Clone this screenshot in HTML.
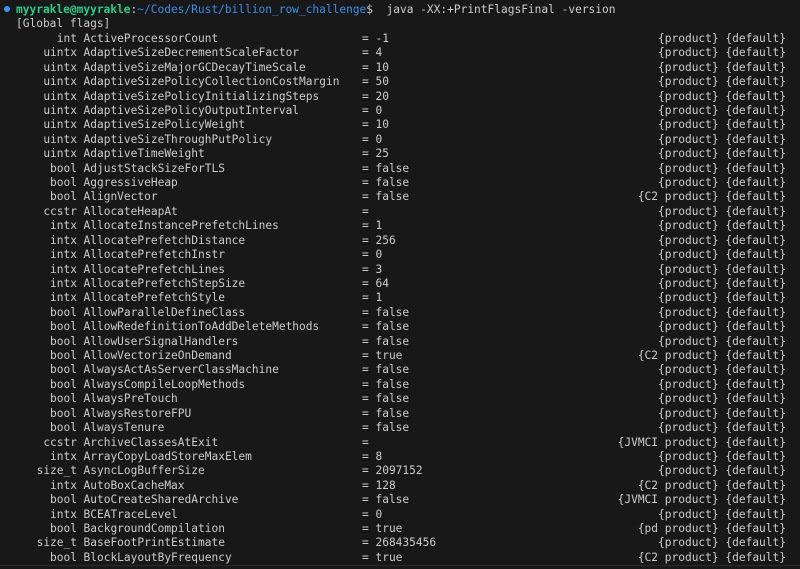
<!DOCTYPE html>
<html><head><meta charset="utf-8"><style>
html,body{margin:0;padding:0;background:#181818;width:800px;height:569px;overflow:hidden}
body{font-family:"DejaVu Sans Mono","Liberation Mono",monospace;font-size:11.2px;color:#cccccc;position:relative}
.r{position:absolute;left:0;width:800px;height:14.42px;line-height:14.42px;white-space:pre;margin-top:1.3px}
.t{position:absolute;right:723px;text-align:right}
.n{position:absolute;left:83.5px}
.v{position:absolute;left:362px}
.k{position:absolute;right:14px}
.g{color:#23d18b;font-weight:bold}.b{color:#3b8eea}
.dot{position:absolute;left:4px;top:6px;width:6px;height:6px;border-radius:50%;background:#3794ff}
.bl{position:absolute;left:0;top:565px;width:800px;height:1px;background:#2b2b2b}
</style></head><body>
<div class="dot"></div>
<div class="r" style="top:1.8px;left:16px"><span class="g">myyrakle@myyrakle</span>:<span class="b">~/Codes/Rust/billion_row_challenge</span>$  java -XX:+PrintFlagsFinal -version</div>
<div class="r" style="top:16.2px;left:16px">[Global flags]</div>
<div class="r" style="top:30.6px"><span class="t">int</span><span class="n">ActiveProcessorCount</span><span class="v">= -1</span><span class="k">{product} {default}</span></div>
<div class="r" style="top:45.0px"><span class="t">uintx</span><span class="n">AdaptiveSizeDecrementScaleFactor</span><span class="v">= 4</span><span class="k">{product} {default}</span></div>
<div class="r" style="top:59.5px"><span class="t">uintx</span><span class="n">AdaptiveSizeMajorGCDecayTimeScale</span><span class="v">= 10</span><span class="k">{product} {default}</span></div>
<div class="r" style="top:73.9px"><span class="t">uintx</span><span class="n">AdaptiveSizePolicyCollectionCostMargin</span><span class="v">= 50</span><span class="k">{product} {default}</span></div>
<div class="r" style="top:88.3px"><span class="t">uintx</span><span class="n">AdaptiveSizePolicyInitializingSteps</span><span class="v">= 20</span><span class="k">{product} {default}</span></div>
<div class="r" style="top:102.7px"><span class="t">uintx</span><span class="n">AdaptiveSizePolicyOutputInterval</span><span class="v">= 0</span><span class="k">{product} {default}</span></div>
<div class="r" style="top:117.1px"><span class="t">uintx</span><span class="n">AdaptiveSizePolicyWeight</span><span class="v">= 10</span><span class="k">{product} {default}</span></div>
<div class="r" style="top:131.5px"><span class="t">uintx</span><span class="n">AdaptiveSizeThroughPutPolicy</span><span class="v">= 0</span><span class="k">{product} {default}</span></div>
<div class="r" style="top:146.0px"><span class="t">uintx</span><span class="n">AdaptiveTimeWeight</span><span class="v">= 25</span><span class="k">{product} {default}</span></div>
<div class="r" style="top:160.4px"><span class="t">bool</span><span class="n">AdjustStackSizeForTLS</span><span class="v">= false</span><span class="k">{product} {default}</span></div>
<div class="r" style="top:174.8px"><span class="t">bool</span><span class="n">AggressiveHeap</span><span class="v">= false</span><span class="k">{product} {default}</span></div>
<div class="r" style="top:189.2px"><span class="t">bool</span><span class="n">AlignVector</span><span class="v">= false</span><span class="k">{C2 product} {default}</span></div>
<div class="r" style="top:203.6px"><span class="t">ccstr</span><span class="n">AllocateHeapAt</span><span class="v">=</span><span class="k">{product} {default}</span></div>
<div class="r" style="top:218.0px"><span class="t">intx</span><span class="n">AllocateInstancePrefetchLines</span><span class="v">= 1</span><span class="k">{product} {default}</span></div>
<div class="r" style="top:232.5px"><span class="t">intx</span><span class="n">AllocatePrefetchDistance</span><span class="v">= 256</span><span class="k">{product} {default}</span></div>
<div class="r" style="top:246.9px"><span class="t">intx</span><span class="n">AllocatePrefetchInstr</span><span class="v">= 0</span><span class="k">{product} {default}</span></div>
<div class="r" style="top:261.3px"><span class="t">intx</span><span class="n">AllocatePrefetchLines</span><span class="v">= 3</span><span class="k">{product} {default}</span></div>
<div class="r" style="top:275.7px"><span class="t">intx</span><span class="n">AllocatePrefetchStepSize</span><span class="v">= 64</span><span class="k">{product} {default}</span></div>
<div class="r" style="top:290.1px"><span class="t">intx</span><span class="n">AllocatePrefetchStyle</span><span class="v">= 1</span><span class="k">{product} {default}</span></div>
<div class="r" style="top:304.5px"><span class="t">bool</span><span class="n">AllowParallelDefineClass</span><span class="v">= false</span><span class="k">{product} {default}</span></div>
<div class="r" style="top:319.0px"><span class="t">bool</span><span class="n">AllowRedefinitionToAddDeleteMethods</span><span class="v">= false</span><span class="k">{product} {default}</span></div>
<div class="r" style="top:333.4px"><span class="t">bool</span><span class="n">AllowUserSignalHandlers</span><span class="v">= false</span><span class="k">{product} {default}</span></div>
<div class="r" style="top:347.8px"><span class="t">bool</span><span class="n">AllowVectorizeOnDemand</span><span class="v">= true</span><span class="k">{C2 product} {default}</span></div>
<div class="r" style="top:362.2px"><span class="t">bool</span><span class="n">AlwaysActAsServerClassMachine</span><span class="v">= false</span><span class="k">{product} {default}</span></div>
<div class="r" style="top:376.6px"><span class="t">bool</span><span class="n">AlwaysCompileLoopMethods</span><span class="v">= false</span><span class="k">{product} {default}</span></div>
<div class="r" style="top:391.0px"><span class="t">bool</span><span class="n">AlwaysPreTouch</span><span class="v">= false</span><span class="k">{product} {default}</span></div>
<div class="r" style="top:405.5px"><span class="t">bool</span><span class="n">AlwaysRestoreFPU</span><span class="v">= false</span><span class="k">{product} {default}</span></div>
<div class="r" style="top:419.9px"><span class="t">bool</span><span class="n">AlwaysTenure</span><span class="v">= false</span><span class="k">{product} {default}</span></div>
<div class="r" style="top:434.3px"><span class="t">ccstr</span><span class="n">ArchiveClassesAtExit</span><span class="v">=</span><span class="k">{JVMCI product} {default}</span></div>
<div class="r" style="top:448.7px"><span class="t">intx</span><span class="n">ArrayCopyLoadStoreMaxElem</span><span class="v">= 8</span><span class="k">{product} {default}</span></div>
<div class="r" style="top:463.1px"><span class="t">size_t</span><span class="n">AsyncLogBufferSize</span><span class="v">= 2097152</span><span class="k">{product} {default}</span></div>
<div class="r" style="top:477.5px"><span class="t">intx</span><span class="n">AutoBoxCacheMax</span><span class="v">= 128</span><span class="k">{C2 product} {default}</span></div>
<div class="r" style="top:492.0px"><span class="t">bool</span><span class="n">AutoCreateSharedArchive</span><span class="v">= false</span><span class="k">{JVMCI product} {default}</span></div>
<div class="r" style="top:506.4px"><span class="t">intx</span><span class="n">BCEATraceLevel</span><span class="v">= 0</span><span class="k">{product} {default}</span></div>
<div class="r" style="top:520.8px"><span class="t">bool</span><span class="n">BackgroundCompilation</span><span class="v">= true</span><span class="k">{pd product} {default}</span></div>
<div class="r" style="top:535.2px"><span class="t">size_t</span><span class="n">BaseFootPrintEstimate</span><span class="v">= 268435456</span><span class="k">{product} {default}</span></div>
<div class="r" style="top:549.6px"><span class="t">bool</span><span class="n">BlockLayoutByFrequency</span><span class="v">= true</span><span class="k">{C2 product} {default}</span></div>
<div class="bl"></div>
</body></html>
